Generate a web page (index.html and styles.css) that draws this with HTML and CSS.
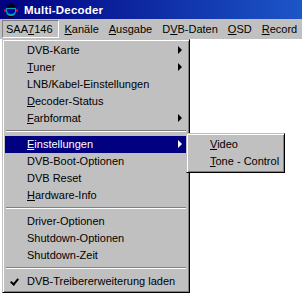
FILE: index.html
```html
<!DOCTYPE html>
<html>
<head>
<meta charset="utf-8">
<link rel="stylesheet" href="styles.css">
</head>
<body>
<div class="window">
  <div class="titlebar">
    <svg class="appicon" width="16" height="16" viewBox="0 0 16 16">
      <path d="M6 1h4v2h2v2H4V3h2z" fill="#000"/>
      <path d="M3 6h10v3c0 3-2 5-5 5S3 12 3 9z" fill="#00a0c0"/>
      <path d="M4 7h8v2c0 2-2 3-4 3S4 11 4 9z" fill="#0000a0"/>
      <rect x="1" y="7" width="2" height="3" fill="#e00000"/>
      <rect x="13" y="7" width="2" height="3" fill="#e00000"/>
      <rect x="5" y="14" width="6" height="1" fill="#000"/>
    </svg>
    <span class="title">Multi-Decoder</span>
  </div>
  <div class="menubar">
    <span class="mitem pressed">SAA<u>7</u>146</span>
    <span class="mitem"><u>K</u>anäle</span>
    <span class="mitem"><u>A</u>usgabe</span>
    <span class="mitem">D<u>V</u>B-Daten</span>
    <span class="mitem"><u>O</u>SD</span>
    <span class="mitem"><u>R</u>ecord</span>
  </div>
  <div class="client">
    <div class="menu main">
      <div class="item sub">DVB-Karte</div>
      <div class="item sub"><u>T</u>uner</div>
      <div class="item">LNB/Kabel-Einstellungen</div>
      <div class="item"><u>D</u>ecoder-Status</div>
      <div class="item sub"><u>F</u>arbformat</div>
      <div class="sep"></div>
      <div class="item sub active"><u>E</u>instellungen
        <div class="menu submenu">
          <div class="item"><u>V</u>ideo</div>
          <div class="item"><u>T</u>one - Control</div>
        </div>
      </div>
      <div class="item">DVB-Boot-Optionen</div>
      <div class="item">DVB Reset</div>
      <div class="item"><u>H</u>ardware-Info</div>
      <div class="sep"></div>
      <div class="item">Driver-Optionen</div>
      <div class="item">Shutdown-Optionen</div>
      <div class="item">Shutdown-Zeit</div>
      <div class="sep"></div>
      <div class="item checked">DVB-Treibererweiterung laden</div>
    </div>
  </div>
</div>
</body>
</html>
```

FILE: styles.css
```css
html, body {
  margin: 0;
  padding: 0;
  background: #fff;
}

.window {
  width: 302px;
  height: 293px;
  overflow: hidden;
  display: flex;
  flex-direction: column;
  font-family: "Liberation Sans", Arial, sans-serif;
  font-size: 11px;
  color: #000;
  background: #fff;
}

.titlebar {
  height: 19px;
  flex: none;
  display: flex;
  align-items: center;
  gap: 5px;
  padding-left: 3px;
  background: linear-gradient(to right, #000080, #1c56c8);
}

.appicon {
  flex: none;
}

.title {
  color: #fff;
  font-weight: bold;
  font-size: 11.5px;
  letter-spacing: 0.2px;
}

.menubar {
  height: 20px;
  flex: none;
  display: flex;
  align-items: center;
  padding-left: 2px;
  background: #c0c0c0;
}

.mitem {
  height: 17px;
  line-height: 17px;
  padding: 0 5px;
  white-space: nowrap;
}

.mitem.pressed {
  border: 1px solid;
  border-color: #808080 #fff #fff #808080;
  height: 16px;
  line-height: 17px;
  padding: 0 5px 0 3px;
  margin-right: 1px;
}

.client {
  flex: 1;
  position: relative;
  background: #fff;
}

.menu {
  position: absolute;
  background: #c0c0c0;
  border: 1px solid;
  border-color: #c0c0c0 #000 #000 #c0c0c0;
  box-shadow: inset 1px 1px #fff, inset -1px -1px #808080;
  padding: 2px;
}

.main {
  left: 2px;
  top: 0;
  width: 182px;
}

.item {
  position: relative;
  height: 17px;
  line-height: 16px;
  padding-left: 22px;
  white-space: nowrap;
}

.item.sub::after {
  content: "";
  position: absolute;
  right: 5px;
  top: 4px;
  border-left: 4px solid #000;
  border-top: 4px solid transparent;
  border-bottom: 4px solid transparent;
}

.item.active {
  background: #000080;
  color: #fff;
}

.item.active::after {
  border-left-color: #fff;
}

.item.checked::before {
  content: "";
  position: absolute;
  left: 7px;
  top: 4px;
  width: 3px;
  height: 6px;
  border-right: 2px solid #000;
  border-bottom: 2px solid #000;
  transform: rotate(40deg);
}

.sep {
  height: 1px;
  margin: 3px 1px 4px;
  background: #808080;
  border-bottom: 1px solid #fff;
}

.submenu {
  left: 181px;
  top: -3px;
  width: 93px;
  color: #000;
}

.submenu .item {
  padding-left: 21px;
}
```
